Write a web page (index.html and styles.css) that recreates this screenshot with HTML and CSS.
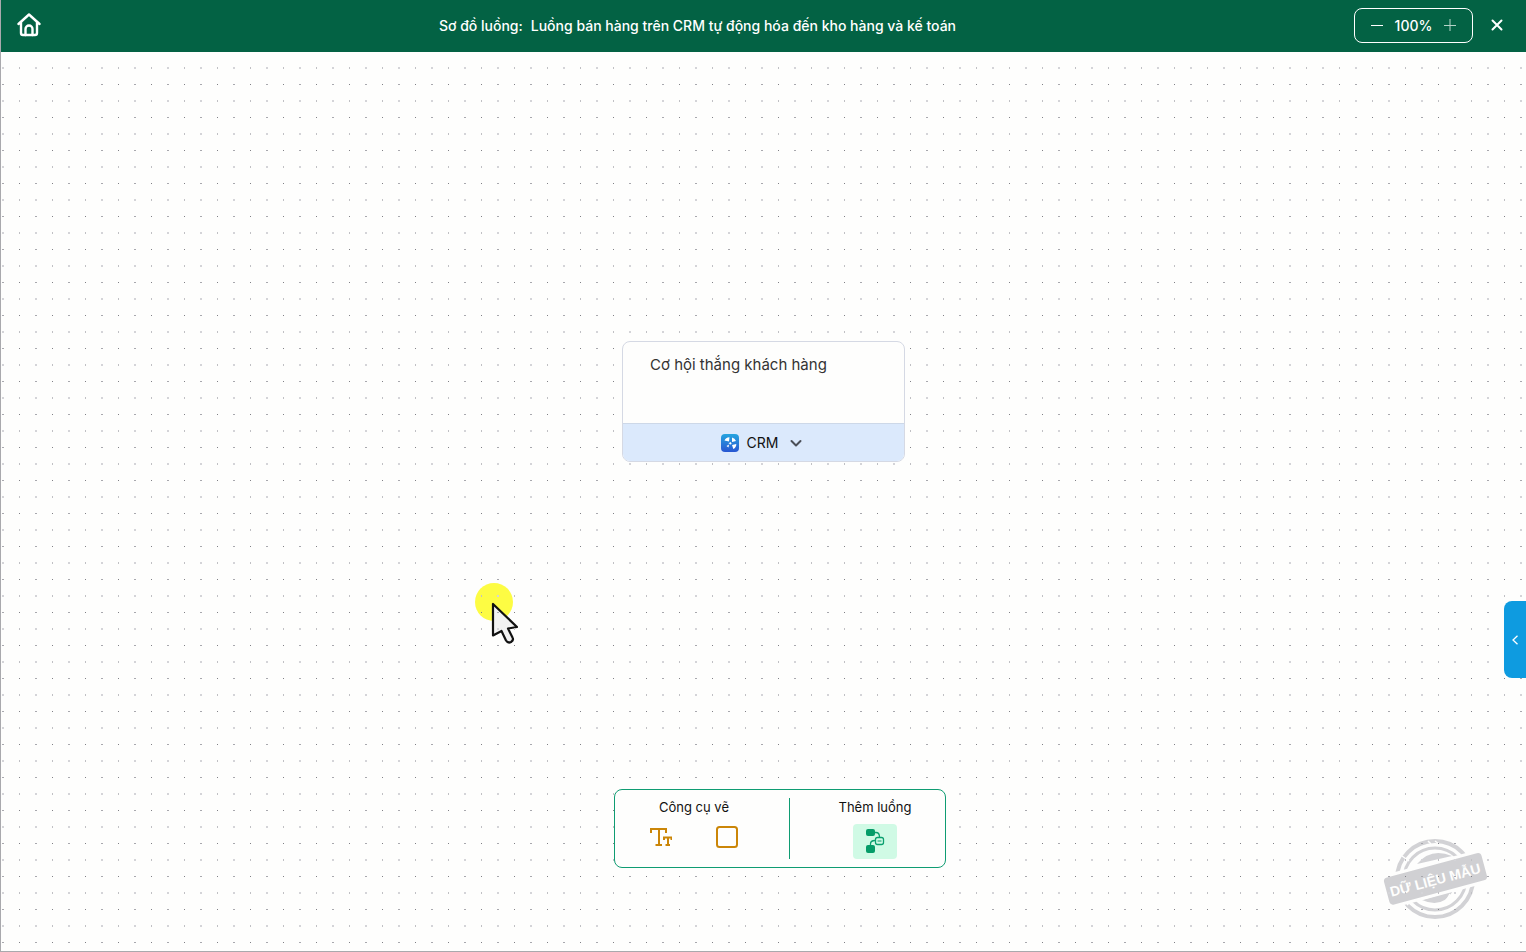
FILE: index.html
```html
<!DOCTYPE html>
<html lang="vi">
<head>
    <meta charset="utf-8">
    <meta name="viewport" content="width=device-width, initial-scale=1.0">
    <title>Sơ đồ luồng</title>
    <link rel="stylesheet" href="styles.css">
</head>
<body>
    <header class="topbar">
        <a class="home" href="#" aria-label="Trang chủ">
            <svg width="24" height="24" viewBox="0 0 24 24" fill="none" stroke="#fff" stroke-width="2.4" stroke-linecap="round" stroke-linejoin="round">
                <path d="M1.500 11 12 1.500 22.500 11"/>
                <path d="M4 9.500V20q0 2 2 2h12q2 0 2-2V9.500"/>
                <path d="M8.500 22v-6a3.500 3.500 0 0 1 7 0v6"/>
            </svg>
        </a>
        <h1 class="title"><span>Sơ đồ luồng:</span><span>Luồng bán hàng trên CRM tự động hóa đến kho hàng và kế toán</span></h1>
        <div class="actions">
            <div class="zoom">
                <button type="button" aria-label="Thu nhỏ">
                    <svg width="12" height="12" viewBox="0 0 12 12" stroke="#fff"><path d="M0 6.500h12"/></svg>
                </button>
                <span class="zoom-value">100%</span>
                <button type="button" aria-label="Phóng to">
                    <svg width="12" height="12" viewBox="0 0 12 12" stroke="#b5d3c7"><path d="M0 6.500h12M6 0v12"/></svg>
                </button>
            </div>
            <button class="close" type="button" aria-label="Đóng">
                <svg width="12" height="12" viewBox="0 0 12 12" stroke="#fff" stroke-width="2" stroke-linecap="round"><path d="m1.500 1.500 9 9M10.500 1.500l-9 9"/></svg>
            </button>
        </div>
    </header>

    <main class="canvas">
        <svg class="stamp" width="104" height="84" viewBox="0 0 104 84" role="img" aria-label="Dữ liệu mẫu">
            <g fill="none" stroke="#d2d2d5">
                <circle cx="52" cy="42" r="38" stroke-width="4"/>
                <circle cx="52" cy="42" r="31" stroke-width="3"/>
            </g>
            <path d="M34 27q14-17 35-8z" fill="#d2d2d5"/>
            <path d="M39 63l31-9q-11 18-31 9z" fill="#d2d2d5"/>
            <g fill="none" stroke="#fefefd" stroke-width="1.500">
                <path d="m19 19 7 5M45 4l3 3M52 4l4 3M24 68l5-5M67 57l-4 7"/>
            </g>
            <g transform="rotate(-15 52 42)">
                <rect x="0" y="25" width="104" height="34" fill="#fefefd"/>
                <rect x="2" y="28" width="101" height="28" rx="4" fill="#d0d0d3"/>
                <text class="stamp-text" x="52" y="48" text-anchor="middle">DỮ LIỆU MẪU</text>
            </g>
        </svg>

        <svg class="pointer" width="46" height="62" viewBox="0 0 46 62" aria-hidden="true">
            <circle cx="20" cy="19" r="19" fill="#fdfc43"/>
            <path d="M19 21v31.500l8.500-4.500 4.500 9.500q2 3 5 1.500 3-2 1.500-4.500L34 45.500l9-1.500z" fill="#f2f2f2" stroke="#111" stroke-width="2.200" stroke-linejoin="round"/>
        </svg>

        <!-- dot grid -->
        <svg class="grid" width="100%" height="100%" aria-hidden="true">
            <defs>
                <pattern id="dots" width="33" height="33" patternUnits="userSpaceOnUse">
                    <path fill="#d4d4d8" d="M1 15h2v2H1z"/>
                    <path fill="#c0c0c4" d="M18 15h1v2h-1z"/>
                    <path fill="#a8a8ae" d="M1 32h2v1H1z"/>
                    <path fill="#808086" d="M18 32h1v1h-1z"/>
                </pattern>
            </defs>
            <rect width="100%" height="100%" fill="url(#dots)"/>
        </svg>

        <section class="node">
            <textarea class="node-text" aria-label="Nội dung" spellcheck="false">Cơ hội thắng khách hàng</textarea>
            <button class="node-app" type="button">
                <svg width="18" height="18" viewBox="0 0 18 18">
                    <defs>
                        <linearGradient id="crm" x1="0" y1="0" x2="0" y2="1">
                            <stop offset="0" stop-color="#25a5df"/>
                            <stop offset="1" stop-color="#2856d2"/>
                        </linearGradient>
                    </defs>
                    <rect width="18" height="18" rx="4" fill="url(#crm)"/>
                    <path fill="#fff" d="M3.500 6.500q1-3 5-3.200L8 7.500zM11 3.500q3 .500 4 3.500l-4 1zM15.300 10q0 3.500-3 5L11 11zM7.500 13.500 5.500 12 8 10.500z"/>
                    <circle cx="9.300" cy="9.300" r="1.600" fill="#fff" stroke="#277fd9"/>
                </svg>
                <span>CRM</span>
                <svg class="chevron" width="12" height="8" viewBox="0 0 12 8" fill="none" stroke="#4b4f58" stroke-width="2" stroke-linecap="round" stroke-linejoin="round"><path d="m1.500 2 4.500 4.500L10.500 2"/></svg>
            </button>
        </section>

        <div class="toolbar">
            <section class="tools">
                <h2>Công cụ vẽ</h2>
                <div class="tool-list">
                    <button type="button" aria-label="Văn bản">
                        <svg width="22" height="20" viewBox="0 0 22 20" fill="none" stroke="#cb8608" stroke-width="2">
                            <path d="M1 6V2h15v4M9 2v16M5.500 18h6.500M14 13v-2.500h7.500V13M18 10.500V18M15.500 18h4.500"/>
                        </svg>
                    </button>
                    <button type="button" aria-label="Khung">
                        <svg width="22" height="22" viewBox="0 0 22 22" fill="none" stroke="#cb8608" stroke-width="2"><rect x="1" y="1" width="20" height="20" rx="2.500"/></svg>
                    </button>
                </div>
            </section>
            <section class="flows">
                <h2>Thêm luồng</h2>
                <button class="add-flow" type="button" aria-label="Thêm luồng">
                    <svg width="20" height="26" viewBox="0 0 20 26" fill="none" stroke="#0ba06f">
                        <rect x="1" y="0" width="9" height="7" rx="2" fill="#059c68" stroke="none"/>
                        <rect x="1" y="16" width="9" height="8" rx="2" fill="#059c68" stroke="none"/>
                        <path stroke-width="1.300" d="M10 3.500h1q3.500 0 3.500 4.500M5.500 16v-1q0-3.500 4.500-3.500"/>
                        <rect x="10.500" y="8.500" width="8" height="7" rx="2" stroke-width="1.300"/>
                        <path d="M12.500 12h4"/>
                    </svg>
                </button>
            </section>
        </div>

        <button class="drawer" type="button" aria-label="Mở bảng bên">
            <svg width="7" height="10" viewBox="0 0 7 10" fill="none" stroke="#fff" stroke-width="1.300"><path d="M5.500.800 1 5l4.500 4.200"/></svg>
        </button>
    </main>
</body>
</html>
```
FILE: styles.css
```css
* {
    box-sizing: border-box;
}
body {
    margin: 0;
    display: flex;
    flex-direction: column;
    min-height: 100vh;
    font-family: Inter, "Noto Sans", sans-serif;
    color: #111;
    background-color: #fefefd;
    border-left: 1px solid #a9a9ad;
    border-bottom: 1px solid #a9a9ad;
}
button {
    display: flex;
    align-items: center;
    justify-content: center;
    padding: 0;
    border: 0;
    background: none;
    font: inherit;
    color: inherit;
    cursor: pointer;
}
h1, h2 {
    margin: 0;
    font-weight: 400;
}

/* top bar */
.topbar {
    display: flex;
    align-items: center;
    justify-content: space-between;
    height: 52px;
    padding: 0 23px 2px 16px;
    background-color: #036244;
    color: #fff;
}
.home {
    display: flex;
}
.title {
    display: flex;
    gap: 8px;
    padding-top: 2px;
    font-size: 14px;
    font-weight: 500;
    line-height: 20px;
}
.actions {
    display: flex;
    align-items: center;
    gap: 18px;
}
.zoom {
    display: flex;
    align-items: center;
    justify-content: center;
    gap: 12px;
    width: 119px;
    height: 35px;
    border: 1px solid #fff;
    border-radius: 8px;
}
.zoom-value {
    padding-top: 2px;
    font-size: 14px;
    font-weight: 500;
    line-height: 20px;
}

/* drawing area */
.canvas {
    position: relative;
    flex: 1;
    overflow: hidden;
}
.grid {
    position: absolute;
    inset: 0;
}
.node {
    position: absolute;
    left: 621px;
    top: 289px;
    width: 283px;
    border: 1px solid #d5d9e4;
    border-radius: 8px;
    background-color: #fefefd;
    overflow: hidden;
}
.node-text {
    display: block;
    width: 100%;
    height: 81px;
    padding: 12px 27px;
    border: 0;
    outline: 0;
    resize: none;
    background: none;
    font-family: inherit;
    font-size: 15px;
    line-height: 22px;
    color: #333;
}
.node-app {
    gap: 8px;
    width: 100%;
    height: 38px;
    padding-right: 4px;
    border-top: 1px solid #cdd8e8;
    background-color: #dbe9fc;
    font-size: 14px;
}
.chevron {
    margin-left: 4px;
}

.pointer {
    position: absolute;
    left: 473px;
    top: 531px;
}
.stamp {
    position: absolute;
    right: 39px;
    bottom: 30px;
}
.stamp-text {
    font-family: "Liberation Sans", Arial, sans-serif;
    font-size: 14px;
    font-weight: 700;
    fill: #fefefd;
}

/* bottom tools */
.toolbar {
    position: absolute;
    left: 613px;
    bottom: 83px;
    display: flex;
    align-items: center;
    width: 332px;
    height: 79px;
    border: 1px solid #0f9c72;
    border-radius: 8px;
    background-color: #fefefd;
}
.toolbar h2 {
    font-size: 13px;
    line-height: 18px;
}
.tools, .flows {
    display: flex;
    flex-direction: column;
    align-items: center;
    height: 61px;
}
.tools {
    width: 175px;
    padding-right: 16px;
    border-right: 1px solid #0f9c72;
}
.flows {
    flex: 1;
    padding-left: 15px;
}
.tool-list {
    display: flex;
    gap: 44px;
    padding-top: 10px;
}
.add-flow {
    width: 44px;
    height: 35px;
    margin-top: 8px;
    border-radius: 4px;
    background-color: #d0fae5;
}

.drawer {
    position: absolute;
    right: 0;
    top: 549px;
    width: 22px;
    height: 77px;
    border-radius: 8px 0 0 8px;
    background-color: #0e9be0;
}
```
